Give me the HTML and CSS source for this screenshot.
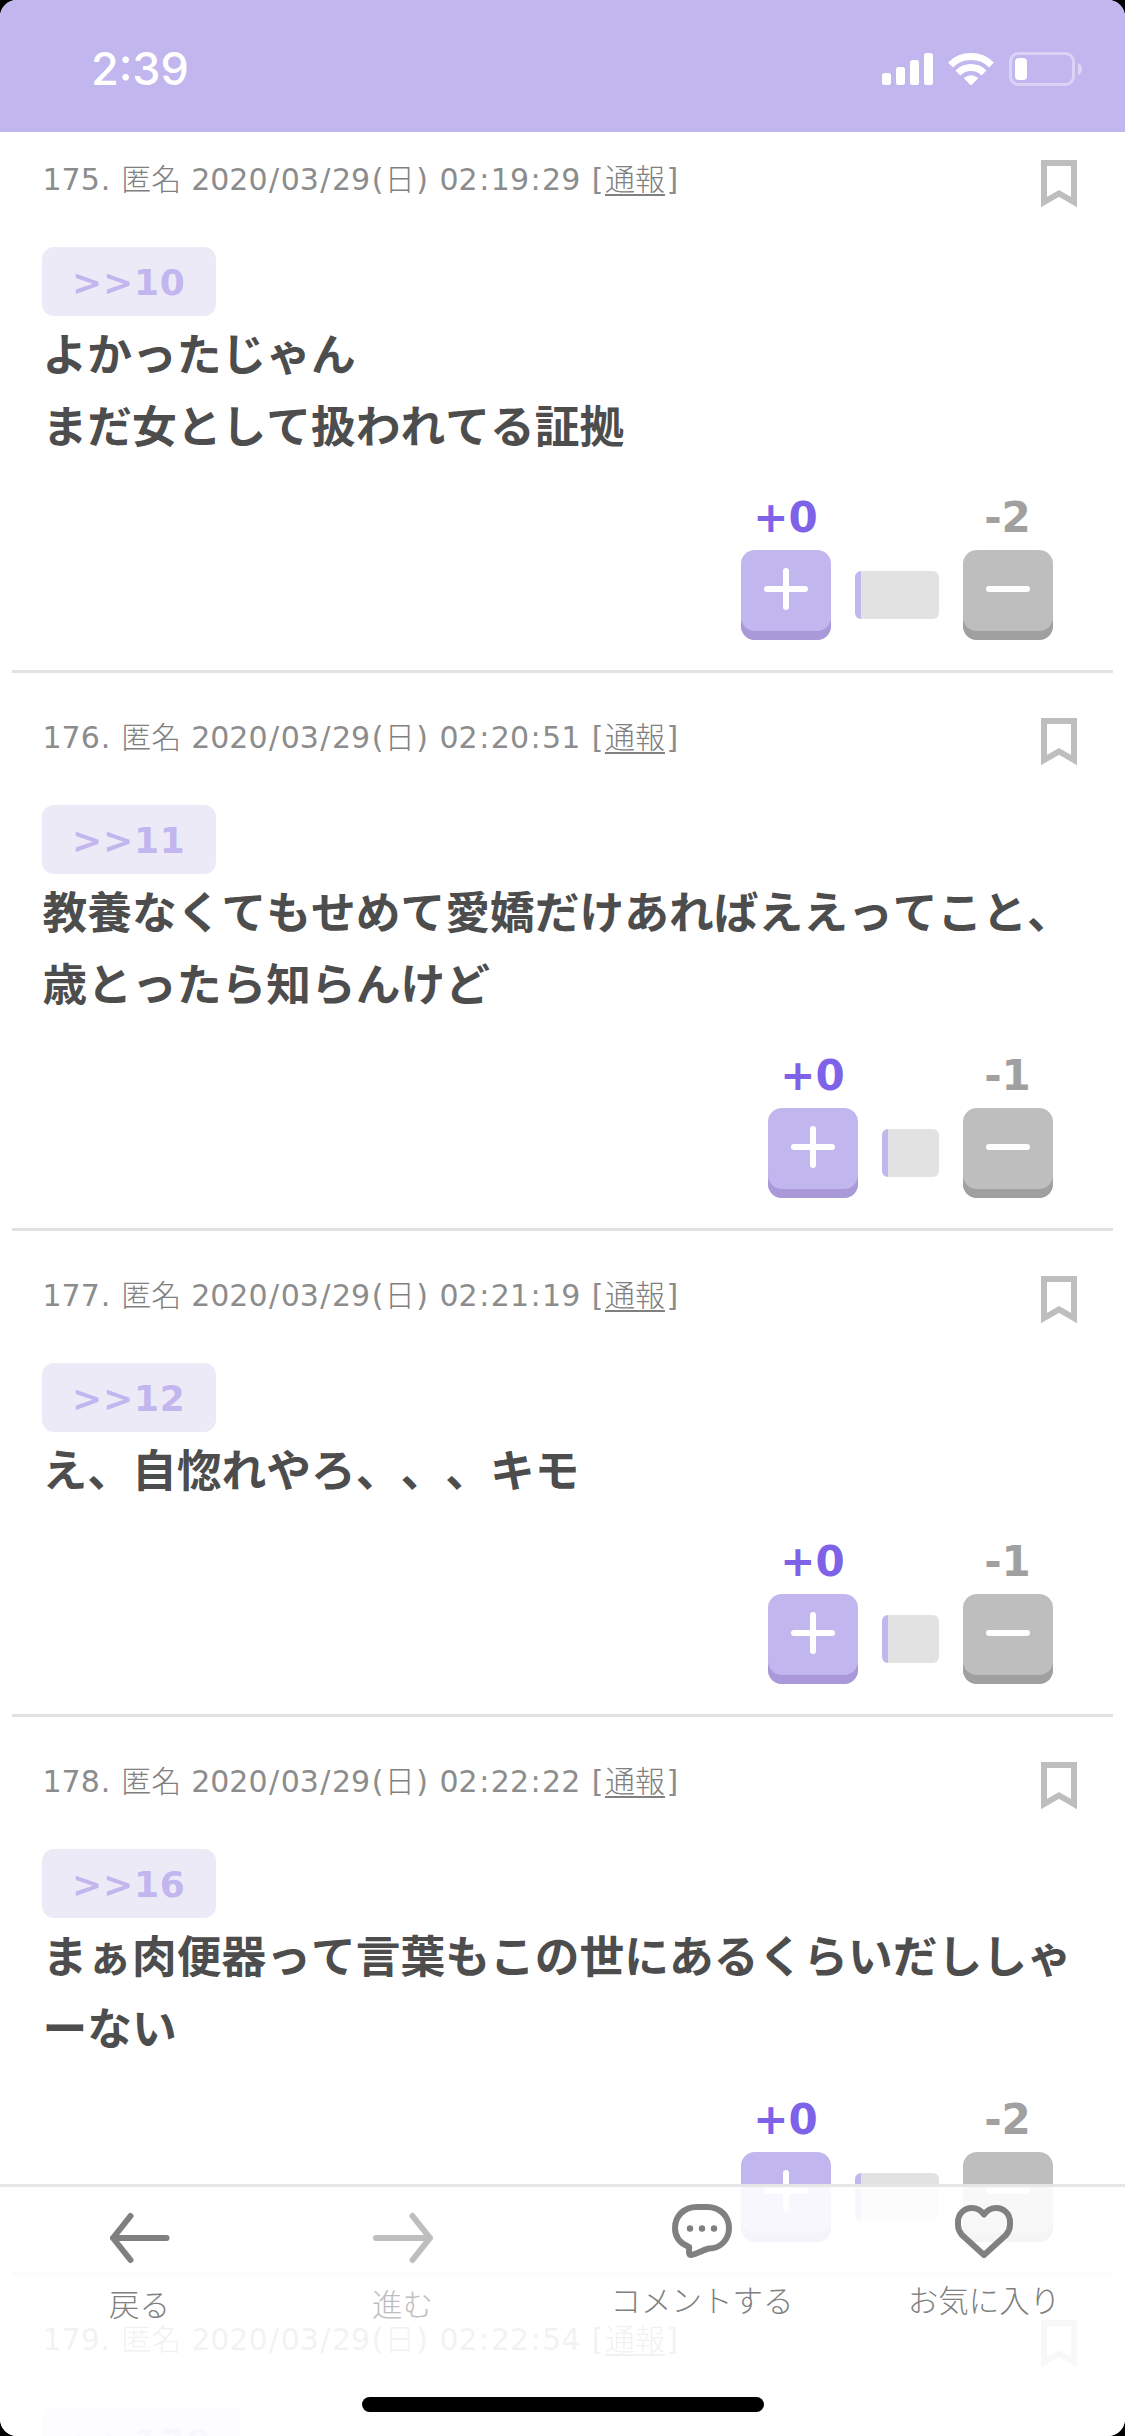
FILE: index.html
```html
<!DOCTYPE html>
<html lang="ja">
<head>
<meta charset="utf-8">
<title>コメント一覧</title>
<link rel="stylesheet" href="styles.css">
</head>
<body>
<svg width="0" height="0" class="defs">
  <symbol id="bookmark" viewBox="0 0 36 48"><path d="M3 3H33V42L18 33.5L3 42Z" fill="none" stroke="currentColor" stroke-width="6" stroke-miterlimit="10"/></symbol>
  <symbol id="plus" viewBox="0 0 44 42"><path d="M3 21H41M22 3V39" fill="none" stroke="#fff" stroke-width="6" stroke-linecap="round"/></symbol>
  <symbol id="minus" viewBox="0 0 44 42"><path d="M3 21H41" fill="none" stroke="#fff" stroke-width="6" stroke-linecap="round"/></symbol>
</svg>
<div class="screen">
  <header class="status">
    <span class="clock">2:39</span>
    <svg class="indicators" viewBox="0 0 204 36" width="204" height="36">
      <g fill="#fff">
        <rect x="2" y="22" width="9" height="12" rx="2.5"/>
        <rect x="16" y="16" width="9" height="18" rx="2.5"/>
        <rect x="30" y="9" width="9" height="25" rx="2.5"/>
        <rect x="44" y="2" width="9" height="32" rx="2.5"/>
        <path d="M91 34L84.2 27.2Q91 22.200 97.800 27.200Z" stroke="#fff" stroke-width="1" stroke-linejoin="round"/>
        <rect x="135" y="7" width="12" height="22" rx="4"/>
      </g>
      <g fill="none" stroke="#fff" stroke-width="7"><path d="M70.500 13.900A29.500 29.500 0 0 1 111.500 13.900"/><path d="M78 21.900A18.500 18.500 0 0 1 104 21.900"/></g>
      <rect x="130.500" y="2.500" width="63" height="31" rx="8" fill="none" stroke="#fff" stroke-opacity=".4" stroke-width="3"/>
      <path d="M198 12Q202 14 202 18T198 24Z" fill="#fff" fill-opacity=".45"/>
    </svg>
  </header>

  <main class="list">
    <article class="comment">
      <div class="meta"><p>175<i>.</i> <span>匿名</span> 2020<i>/</i>03<i>/</i>29<i>(</i><span>日</span><i>)</i> 02<i>:</i>19<i>:</i>29 <i>[</i><u>通報</u><i>]</i></p><svg class="mark"><use href="#bookmark"/></svg></div>
      <a class="ref">&gt;&gt;10</a>
      <p class="text">よかったじゃん<br>まだ女として扱われてる証拠</p>
      <div class="votes">
        <div class="vote up"><b>+0</b><span class="btn"><svg><use href="#plus"/></svg></span></div>
        <div class="bar" style="width:84px"></div>
        <div class="vote down"><b>-2</b><span class="btn"><svg><use href="#minus"/></svg></span></div>
      </div>
    </article>
    <article class="comment">
      <div class="meta"><p>176<i>.</i> <span>匿名</span> 2020<i>/</i>03<i>/</i>29<i>(</i><span>日</span><i>)</i> 02<i>:</i>20<i>:</i>51 <i>[</i><u>通報</u><i>]</i></p><svg class="mark"><use href="#bookmark"/></svg></div>
      <a class="ref">&gt;&gt;11</a>
      <p class="text">教養なくてもせめて愛嬌だけあればええってこと、<br>歳とったら知らんけど</p>
      <div class="votes">
        <div class="vote up"><b>+0</b><span class="btn"><svg><use href="#plus"/></svg></span></div>
        <div class="bar" style="width:57px"></div>
        <div class="vote down"><b>-1</b><span class="btn"><svg><use href="#minus"/></svg></span></div>
      </div>
    </article>
    <article class="comment">
      <div class="meta"><p>177<i>.</i> <span>匿名</span> 2020<i>/</i>03<i>/</i>29<i>(</i><span>日</span><i>)</i> 02<i>:</i>21<i>:</i>19 <i>[</i><u>通報</u><i>]</i></p><svg class="mark"><use href="#bookmark"/></svg></div>
      <a class="ref">&gt;&gt;12</a>
      <p class="text">え、自惚れやろ、、、キモ</p>
      <div class="votes">
        <div class="vote up"><b>+0</b><span class="btn"><svg><use href="#plus"/></svg></span></div>
        <div class="bar" style="width:57px"></div>
        <div class="vote down"><b>-1</b><span class="btn"><svg><use href="#minus"/></svg></span></div>
      </div>
    </article>
    <article class="comment">
      <div class="meta"><p>178<i>.</i> <span>匿名</span> 2020<i>/</i>03<i>/</i>29<i>(</i><span>日</span><i>)</i> 02<i>:</i>22<i>:</i>22 <i>[</i><u>通報</u><i>]</i></p><svg class="mark"><use href="#bookmark"/></svg></div>
      <a class="ref">&gt;&gt;16</a>
      <p class="text">まぁ肉便器って言葉もこの世にあるくらいだししゃ<br>ーない</p>
      <div class="votes">
        <div class="vote up"><b>+0</b><span class="btn"><svg><use href="#plus"/></svg></span></div>
        <div class="bar" style="width:84px"></div>
        <div class="vote down"><b>-2</b><span class="btn"><svg><use href="#minus"/></svg></span></div>
      </div>
    </article>
    <article class="comment">
      <div class="meta"><p>179<i>.</i> <span>匿名</span> 2020<i>/</i>03<i>/</i>29<i>(</i><span>日</span><i>)</i> 02<i>:</i>22<i>:</i>54 <i>[</i><u>通報</u><i>]</i></p><svg class="mark"><use href="#bookmark"/></svg></div>
      <a class="ref">&gt;&gt;178</a>
    </article>
  </main>

  <nav class="toolbar">
    <div class="tabs">
      <a class="tab"><svg width="60" height="54" viewBox="0 0 60 54"><path d="M56.500 28H3M20.500 6L3 28L20.500 50"/></svg><span>戻る</span></a>
      <a class="tab off"><svg width="60" height="54" viewBox="0 0 60 54"><path d="M3 28H57M39.500 6L57 28L39.500 50"/></svg><span>進む</span></a>
      <a class="tab wide"><svg width="60" height="54" viewBox="0 0 60 54"><path d="M25 3H35C48 3 57 12 57 24C57 36 48 44.500 37 44.500C30 46 25 50 19 51C16.500 51 17 48 17.200 43C8 39.500 3 33 3 24C3 12 12 3 25 3Z"/><g class="dots"><circle cx="18" cy="24.500" r="3.200"/><circle cx="30" cy="24.500" r="3.200"/><circle cx="42" cy="24.500" r="3.200"/></g></svg><span>コメントする</span></a>
      <a class="tab wide"><svg width="60" height="54" viewBox="0 0 60 54"><path d="M30 10.500C26 5 22 4 18 4C10 4 4 10 4 18V21C4 25 5.500 28 8 31L30 51L52 31C54.500 28 56 25 56 21V18C56 10 50 4 42 4C38 4 34 5 30 10.500Z"/></svg><span>お気に入り</span></a>
    </div>
    <div class="home"></div>
  </nav>
</div>
</body>
</html>
```
FILE: styles.css
```css
* { box-sizing: border-box; }
body { margin: 0; background: #000; }
p { margin: 0; }
.defs { position: absolute; }
.screen {
  position: relative;
  width: 1125px;
  height: 2436px;
  overflow: hidden;
  border-radius: 17px;
  background: #fff;
  font-family: "DejaVu Sans", "Noto Sans CJK JP", sans-serif;
}
.status {
  position: relative;
  z-index: 1;
  height: 132px;
  padding: 51px 41px 0 91px;
  display: flex;
  justify-content: space-between;
  align-items: flex-start;
  background: #c1b6ee;
}
.clock {
  font: 500 45px/36px Inter, sans-serif;
  color: #fff;
}

/* the list is scrolled a little way under the status bar */
.list { margin: -17px 12px 0; }
.comment {
  padding: 45px 36px 30px 30px;
  border-bottom: 3px solid #e2e2e2;
}
.meta {
  height: 87px;
  display: flex;
  justify-content: space-between;
  align-items: flex-start;
  color: #8c8c8c;
}
.meta p {
  padding: 1px 0 0 .5px;
  font-size: 30px;
  line-height: 38px;
  word-spacing: .4px;
  white-space: nowrap;
}
.meta i { font-style: normal; padding: 0 1px; }
.meta i:not(:first-child) { padding: 0 1.500px; }
.meta span, .meta u { font-family: "Noto Sans CJK JP", sans-serif; font-weight: 300; line-height: 1; color: #808080; }
.meta u { text-decoration-thickness: 2px; text-underline-offset: 4px; }
.mark { width: 36px; height: 48px; color: #bebebe; }
.ref {
  display: block;
  width: max-content;
  height: 69px;
  padding: 0 30px;
  border-radius: 12px;
  background: #edeaf8;
  color: #c1b6ee;
  font-size: 36px;
  font-weight: 700;
  line-height: 71px;
  letter-spacing: .8px;
}
.text {
  padding-left: .5px;
  font-family: "Noto Sans CJK JP", sans-serif;
  font-size: 44.750px;
  font-weight: 700;
  line-height: 72px;
  color: #4d4d4d;
  white-space: nowrap;
  font-kerning: none;
  text-spacing-trim: space-all;
}
.votes {
  display: flex;
  justify-content: flex-end;
  align-items: flex-end;
  gap: 24px;
  padding: 31px 24px 0 0;
}
.vote {
  width: 90px;
  display: flex;
  flex-direction: column;
  align-items: center;
  gap: 8px;
}
.vote b {
  height: 51px;
  padding-right: 1px;
  font-size: 42px;
  line-height: 53px;
  white-space: nowrap;
}
.up b { color: #7e62e8; }
.down b { color: #a0a0a0; }
.btn {
  width: 90px;
  height: 90px;
  padding-top: 18px;
  display: flex;
  justify-content: center;
  align-items: flex-start;
  border-radius: 14px;
}
.btn svg { width: 44px; height: 42px; }
.up .btn { background: #c1b6ee; box-shadow: inset 0 -9px #a999d9; }
.down .btn { background: #bebebe; box-shadow: inset 0 -9px #a0a0a0; }
.bar {
  height: 48px;
  margin-bottom: 21px;
  border-radius: 6px;
  background: linear-gradient(90deg, #c1b6ee 6px, #e2e2e2 6px);
}

.toolbar {
  position: absolute;
  left: 0;
  right: 0;
  bottom: 0;
  z-index: 2;
  height: 252px;
  border-top: 3px solid #e6e6e6;
  background: rgba(255, 255, 255, .89);
  background-clip: padding-box;
}
.tabs {
  height: 210px;
  padding-left: 8px;
  display: grid;
  grid-template-columns: 263px 290px 282px 282px;
}
.tab {
  display: flex;
  flex-direction: column;
  align-items: center;
  padding-top: 23px;
  color: #808080;
}
.tab.off { color: #bebebe; padding-right: 27px; }
.tab svg { fill: none; stroke: currentColor; stroke-width: 6px; stroke-linecap: round; stroke-linejoin: round; }
.tab .dots { fill: currentColor; stroke: none; }
.tab span {
  margin-top: 17px;
  font: 300 30.500px/44px "Noto Sans CJK JP", sans-serif;
  white-space: nowrap;
}
.tab.wide { padding-top: 17px; }
.tab.wide span { margin-top: 19px; }
.home {
  width: 402px;
  height: 15px;
  margin: 0 auto;
  border-radius: 8px;
  background: #000;
}
```
